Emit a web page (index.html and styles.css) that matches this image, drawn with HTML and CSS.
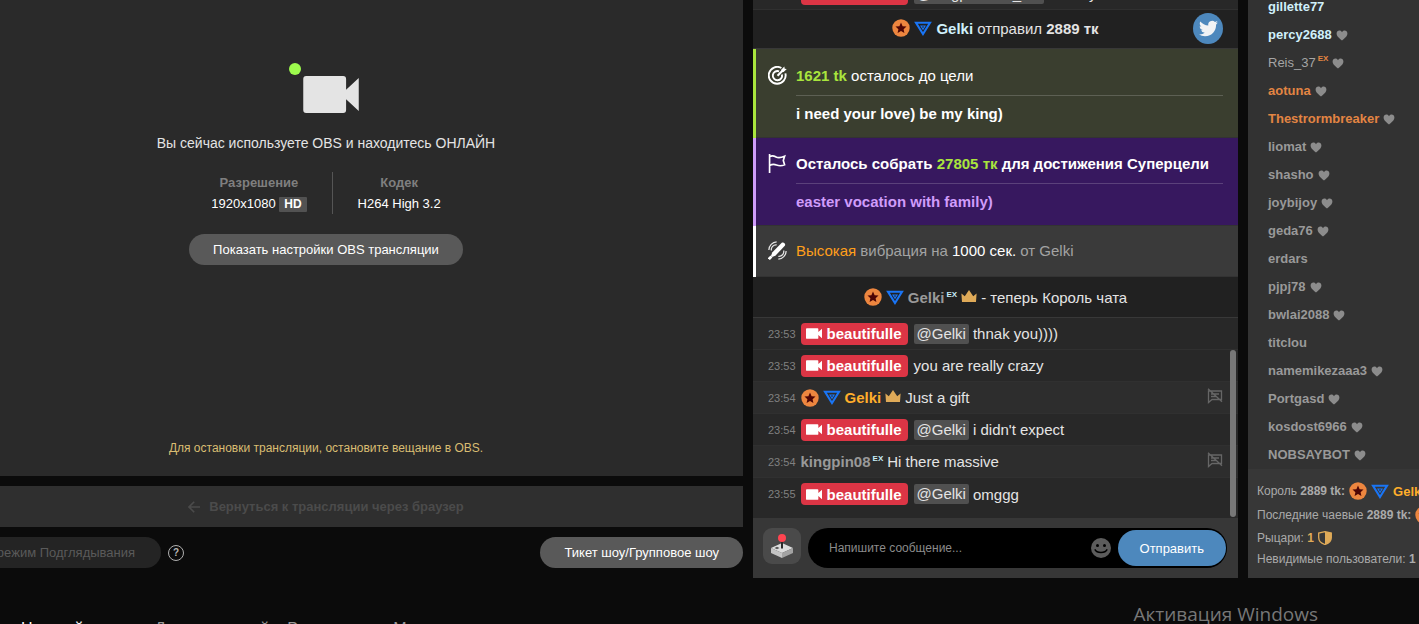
FILE: index.html
```html
<!DOCTYPE html>
<html lang="ru">
<head>
    <meta charset="UTF-8">
    <meta name="viewport" content="width=device-width, initial-scale=1.0">
    <title>Трансляция</title>
    <link rel="stylesheet" href="styles.css">
</head>
<body>
    <svg class="sprite" aria-hidden="true">
        <symbol id="star" viewBox="0 0 18 18">
            <circle cx="9" cy="9" r="8.7" fill="#ed863f"/>
            <path d="M9 3.6l1.6 3.6 3.9.4-2.9 2.6.8 3.9L9 12.1l-3.4 2 .8-3.9-2.9-2.6 3.9-.4z" fill="#4d0505"/>
        </symbol>
        <symbol id="tri" viewBox="0 0 18 15">
            <path d="M2 1.7h14L9 13z" fill="none" stroke="#1a75f5" stroke-width="2.1"/>
            <path d="M6 4.6h6L9 9.3z" fill="#1a75f5"/>
            <circle cx="9" cy="6" r=".8" fill="#222"/>
        </symbol>
        <symbol id="crown" viewBox="0 0 16 12">
            <path d="M.4 3.4l3.4 2.8L8 0l4.2 6.2 3.4-2.8-.6 8.6H1z" fill="#dfaa58"/>
        </symbol>
        <symbol id="cam" viewBox="0 0 57 38">
            <path d="M3 0h38a3 3 0 0 1 3 3v11L57 2v34L44 24v11a3 3 0 0 1-3 3H3a3 3 0 0 1-3-3V3a3 3 0 0 1 3-3z" fill="currentColor"/>
        </symbol>
        <symbol id="heart" viewBox="0 0 12 11">
            <path d="M6 10.6C3.5 8.5.6 6.4.6 3.6.6 1.8 1.9.6 3.4.6 4.5.6 5.5 1.2 6 2.2 6.5 1.2 7.5.6 8.6.6 10.1.6 11.4 1.8 11.4 3.6 11.4 6.4 8.5 8.5 6 10.6z" fill="#8c8c8c"/>
        </symbol>
        <symbol id="mute" viewBox="0 0 16 16">
            <path d="M1.5 3v11.5l3.5-3h9.500V3zM4 6h8M4 8.500h5M1 .8l14 13" fill="none" stroke="#666" stroke-width="1.3"/>
        </symbol>
    </svg>

    <main class="layout">
        <section class="stage">
            <div class="player">
                <div class="camera">
                    <svg class="camera-icon"><use href="#cam"/></svg>
                    <span class="camera-dot"></span>
                </div>
                <p class="status">Вы сейчас используете OBS и находитесь ОНЛАЙН</p>
                <dl class="info">
                    <div>
                        <dt>Разрешение</dt>
                        <dd>1920x1080 <span class="hd">HD</span></dd>
                    </div>
                    <div>
                        <dt>Кодек</dt>
                        <dd>H264 High 3.2</dd>
                    </div>
                </dl>
                <button type="button" class="btn">Показать настройки OBS трансляции</button>
                <p class="stop-hint">Для остановки трансляции, остановите вещание в OBS.</p>
            </div>
            <button type="button" class="back" disabled>
                <svg class="back-icon" viewBox="0 0 12 12"><path d="M12 6H1M6.2.8L1 6l5.2 5.2" fill="none" stroke="currentColor" stroke-width="1.6"/></svg>
                Вернуться к трансляции через браузер
            </button>
            <div class="modes">
                <button type="button" class="btn btn-off" disabled>Включить режим Подглядывания</button>
                <button type="button" class="help" aria-label="Помощь">?</button>
                <button type="button" class="btn btn-ticket">Тикет шоу/Групповое шоу</button>
            </div>
        </section>

        <section class="chat">
            <div class="messages">
                <div class="msg">
                    <time>23:53</time>
                    <span class="model"><svg class="model-icon"><use href="#cam"/></svg>beautifulle</span>
                    <span class="mention">@kingpin0899_EX</span>
                    <span>thank you</span>
                </div>
                <div class="system tip">
                    <svg class="star"><use href="#star"/></svg>
                    <svg class="tri"><use href="#tri"/></svg>
                    <span><b class="ice">Gelki</b> отправил <b>2889 тк</b></span>
                    <a href="#" class="twitter" aria-label="Twitter">
                        <svg viewBox="0 0 24 24"><path d="M23.95 4.57a10 10 0 0 1-2.82.77 4.96 4.96 0 0 0 2.16-2.72c-.95.55-2 .96-3.12 1.18a4.92 4.92 0 0 0-8.38 4.48C7.69 8.09 4.07 6.13 1.64 3.16a4.82 4.82 0 0 0-.67 2.48c0 1.71.87 3.21 2.19 4.1a4.9 4.9 0 0 1-2.23-.62v.06a4.92 4.92 0 0 0 3.95 4.83 5 5 0 0 1-2.21.08 4.94 4.94 0 0 0 4.6 3.42A9.87 9.87 0 0 1 0 19.54a13.99 13.99 0 0 0 7.55 2.21c9.05 0 14-7.5 14-13.98 0-.21 0-.42-.02-.63a9.94 9.94 0 0 0 2.42-2.57z" fill="#f1f3f5"/></svg>
                    </a>
                </div>
                <div class="card goal">
                    <svg class="card-icon" viewBox="0 0 18 18">
                        <g fill="none" stroke="#fff" stroke-width="1.8">
                            <path d="M12.7 1.9A8 8 0 1 0 16.5 7"/>
                            <path d="M10.5 5A4.400 4.400 0 1 0 13.200 8"/>
                            <path d="M9 9.200l4.500-4.500" stroke-width="2"/>
                        </g>
                        <path d="M12.5 3.5L15.5.5l.3 2 2 .3-3 3h-2.3z" fill="#fff"/>
                    </svg>
                    <div class="card-body">
                        <p><b class="green">1621 tk</b> осталось до цели</p>
                        <p class="card-note">i need your love) be my king)</p>
                    </div>
                </div>
                <div class="card super">
                    <svg class="card-icon" viewBox="0 0 18 18">
                        <path d="M1.5 0v18M1.5 2.500c3-1.500 4.500-.5 6 .3s4 1.200 8.200-.6l-1.200 4 1.200 4c-3.200 1.400-5.700 1-7.700.2s-3.500-1-6.500.4" fill="none" stroke="#fff" stroke-width="1.6"/>
                    </svg>
                    <div class="card-body">
                        <p><b>Осталось собрать <span class="green">27805 тк</span> для достижения Суперцели</b></p>
                        <p class="card-note">easter vocation with family)</p>
                    </div>
                </div>
                <div class="card vibro">
                    <svg class="card-icon" viewBox="0 0 18 18">
                        <path d="M2.8 14.200L4 11 13 1.700c1.800-1.300 4.200 1.100 2.900 2.900L7 14l-3.200 1.200z" fill="#fff"/>
                        <path d="M.8 17.200l2.500-2.500" stroke="#fff" stroke-width="2.600"/>
                        <g fill="none" stroke="#e4e4e4" stroke-width="1.2">
                            <path d="M3.2 9a4.500 4.500 0 0 1 5-5.300M.8 8.500a8 8 0 0 1 7.400-7.700M14.800 9a4.500 4.500 0 0 1-5 5.500M17.200 9.500a8 8 0 0 1-7.400 7.700"/>
                        </g>
                    </svg>
                    <p><span class="orange">Высокая</span> вибрация на <span class="white">1000 сек.</span> от Gelki</p>
                </div>
                <div class="system king">
                    <svg class="star"><use href="#star"/></svg>
                    <svg class="tri"><use href="#tri"/></svg>
                    <span><b class="grey">Gelki</b><sup>EX</sup></span>
                    <svg class="crown"><use href="#crown"/></svg>
                    <span>- теперь Король чата</span>
                </div>
                <div class="msg">
                    <time>23:53</time>
                    <span class="model"><svg class="model-icon"><use href="#cam"/></svg>beautifulle</span>
                    <span class="mention">@Gelki</span>
                    <span>thnak you))))</span>
                </div>
                <div class="msg">
                    <time>23:53</time>
                    <span class="model"><svg class="model-icon"><use href="#cam"/></svg>beautifulle</span>
                    <span>you are really crazy</span>
                </div>
                <div class="msg guest">
                    <time>23:54</time>
                    <svg class="star"><use href="#star"/></svg>
                    <svg class="tri"><use href="#tri"/></svg>
                    <b class="gold">Gelki</b>
                    <svg class="crown"><use href="#crown"/></svg>
                    <span>Just a gift</span>
                    <button type="button" class="mute" aria-label="Заглушить"><svg><use href="#mute"/></svg></button>
                </div>
                <div class="msg">
                    <time>23:54</time>
                    <span class="model"><svg class="model-icon"><use href="#cam"/></svg>beautifulle</span>
                    <span class="mention">@Gelki</span>
                    <span>i didn't expect</span>
                </div>
                <div class="msg guest">
                    <time>23:54</time>
                    <span><b class="grey">kingpin08</b><sup>EX</sup></span>
                    <span>Hi there massive</span>
                    <button type="button" class="mute" aria-label="Заглушить"><svg><use href="#mute"/></svg></button>
                </div>
                <div class="msg">
                    <time>23:55</time>
                    <span class="model"><svg class="model-icon"><use href="#cam"/></svg>beautifulle</span>
                    <span class="mention">@Gelki</span>
                    <span>omggg</span>
                </div>
                <span class="scroll-thumb"></span>
            </div>
            <form class="send-form" action="">
                <button type="button" class="games" aria-label="Игры">
                    <svg viewBox="0 0 22 24">
                        <path d="M0 14l11-5 11 5-11 5z" fill="#dcdcdc"/>
                        <path d="M0 14l11 5v5L0 19z" fill="#c4c4c4"/>
                        <path d="M22 14l-11 5v5l11-5z" fill="#a2a2a2"/>
                        <path d="M3.5 14L6 12.800 8.500 14 6 15.200z" fill="#555"/>
                        <path d="M11 7v7.500" stroke="#2b2b2b" stroke-width="2"/>
                        <circle cx="11" cy="4" r="4" fill="#ff4450"/>
                    </svg>
                </button>
                <div class="field">
                    <input id="message" type="text" placeholder="Напишите сообщение..." aria-label="Сообщение">
                    <button type="button" class="smile" aria-label="Смайлы">
                        <svg viewBox="0 0 20 20">
                            <circle cx="10" cy="10" r="10" fill="#5c5c5c"/>
                            <circle cx="6.500" cy="7.500" r="1.500" fill="#000"/>
                            <circle cx="13.500" cy="7.500" r="1.500" fill="#000"/>
                            <path d="M3.800 11.300c2.200 4.200 10.200 4.200 12.400 0" fill="none" stroke="#000" stroke-width="1.500"/>
                        </svg>
                    </button>
                    <button type="submit" class="send">Отправить</button>
                </div>
            </form>
        </section>

        <aside class="users">
            <ul class="user-list">
                <li class="ice">gillette77</li>
                <li class="ice">percy2688 <svg class="heart"><use href="#heart"/></svg></li>
                <li class="plain"><span>Reis_37<sup>EX</sup></span> <svg class="heart"><use href="#heart"/></svg></li>
                <li class="amber">aotuna <svg class="heart"><use href="#heart"/></svg></li>
                <li class="amber">Thestrormbreaker <svg class="heart"><use href="#heart"/></svg></li>
                <li>liomat <svg class="heart"><use href="#heart"/></svg></li>
                <li>shasho <svg class="heart"><use href="#heart"/></svg></li>
                <li>joybijoy <svg class="heart"><use href="#heart"/></svg></li>
                <li>geda76 <svg class="heart"><use href="#heart"/></svg></li>
                <li>erdars</li>
                <li>pjpj78 <svg class="heart"><use href="#heart"/></svg></li>
                <li>bwlai2088 <svg class="heart"><use href="#heart"/></svg></li>
                <li>titclou</li>
                <li>namemikezaaa3 <svg class="heart"><use href="#heart"/></svg></li>
                <li>Portgasd <svg class="heart"><use href="#heart"/></svg></li>
                <li>kosdost6966 <svg class="heart"><use href="#heart"/></svg></li>
                <li>NOBSAYBOT <svg class="heart"><use href="#heart"/></svg></li>
            </ul>
            <div class="totals">
                <div class="total tall">
                    <span>Король <b>2889 tk:</b></span>
                    <svg class="star"><use href="#star"/></svg>
                    <svg class="tri"><use href="#tri"/></svg>
                    <b class="gold">Gelki</b>
                </div>
                <div class="total tall">
                    <span>Последние чаевые <b>2889 tk:</b></span>
                    <svg class="star"><use href="#star"/></svg>
                </div>
                <div class="total">
                    <span>Рыцари: <b class="knight">1</b></span>
                    <svg class="shield" viewBox="0 0 14 14">
                        <path d="M7 .7L13.300 2v4.500C13.300 10 10.500 12.500 7 13.500 3.500 12.500.7 10 .7 6.500V2z" fill="none" stroke="#dfaa58" stroke-width="1.300"/>
                        <path d="M7 .7L13.300 2v4.500C13.300 10 10.500 12.500 7 13.500z" fill="#dfaa58"/>
                    </svg>
                </div>
                <div class="total"><span>Невидимые пользователи: <b>1</b></span></div>
            </div>
        </aside>
    </main>

    <nav class="tabs">
        <a href="#" class="active">Настройки чата</a>
        <a href="#">Доход моделей</a>
        <a href="#">Расписание</a>
        <a href="#">Мои</a>
    </nav>
    <div class="watermark">Активация Windows</div>
</body>
</html>
```
FILE: styles.css
```css
*{
    padding: 0;
    margin: 0;
    box-sizing: border-box;
}
body{
    height: 100vh;
    overflow: hidden;
    position: relative;
    font-family: "Liberation Sans", Arial, sans-serif;
    font-size: 15px;
    color: #e4e4e4;
    background: #0b0b0b;
}
button, input{
    font-family: inherit;
    border: none;
    outline: none;
}
button{
    cursor: pointer;
}
svg{
    display: block;
    flex-shrink: 0;
}
.sprite{
    position: absolute;
    width: 0;
    height: 0;
}
.layout{
    display: grid;
    grid-template-columns: minmax(0, 743fr) minmax(0, 485fr) minmax(0, 171fr);
    column-gap: 10px;
    height: 578px;
}

/* broadcast */
.stage{
    margin-left: -91px;
    display: flex;
    flex-direction: column;
    gap: 10px;
}
.player{
    flex: 1;
    display: flex;
    flex-direction: column;
    align-items: center;
    padding: 76px 0 20px;
    background: #2a2a2a;
}
.camera{
    position: relative;
    color: #e4e4e4;
}
.camera-icon{
    width: 56px;
    height: 37px;
    margin-left: 10px;
}
.camera-dot{
    position: absolute;
    top: -13px;
    left: -4px;
    width: 12px;
    height: 12px;
    border-radius: 50%;
    background: #9dfb4d;
}
.status{
    margin-top: 20px;
    font-size: 14px;
    line-height: 20px;
}
.info{
    display: flex;
    margin: 19px 0 20px;
    font-size: 13px;
    line-height: 21px;
    text-align: center;
}
.info div{
    padding: 0 25px;
}
.info div + div{
    border-left: 1px solid #555;
}
.info dt{
    font-weight: bold;
    color: #7f7f7f;
}
.info dd{
    color: #fff;
}
.hd{
    padding: 0 5px;
    font-size: 12px;
    font-weight: bold;
    line-height: 15px;
    display: inline-block;
    border-radius: 1px;
    background: #525252;
}
.btn{
    height: 31px;
    padding: 0 24px;
    border-radius: 16px;
    font-size: 13px;
    color: #fff;
    background: #595959;
}
.stop-hint{
    margin-top: auto;
    font-size: 12px;
    line-height: 16px;
    color: #d9bd72;
}
.back{
    height: 41px;
    display: flex;
    align-items: center;
    justify-content: center;
    gap: 9px;
    font-size: 13px;
    font-weight: bold;
    color: #4b4b4b;
    background: #2f2f2f;
}
.back-icon{
    width: 12px;
    height: 12px;
}
.modes{
    display: flex;
    align-items: center;
    gap: 7px;
    margin-bottom: 10px;
}
.btn-off{
    min-width: 252px;
    color: #5a5a5a;
    background: #242424;
}
.help{
    width: 16px;
    height: 16px;
    border: 1px solid #b0b0b0;
    border-radius: 50%;
    font-size: 10px;
    font-weight: bold;
    line-height: 14px;
    color: #b5b5b5;
    background: none;
}
.btn-ticket{
    margin-left: auto;
}

/* chat */
.chat{
    display: flex;
    flex-direction: column;
    min-height: 0;
}
.messages{
    flex: 1;
    min-height: 0;
    position: relative;
    overflow: hidden;
    display: flex;
    flex-direction: column;
    justify-content: flex-end;
    padding-bottom: 8px;
    background: #282828;
}
.messages > div{
    flex-shrink: 0;
}
.star{
    width: 18px;
    height: 18px;
}
.tri{
    width: 18px;
    height: 15px;
}
.crown{
    width: 16px;
    height: 12px;
    margin-bottom: 3px;
}
.msg, .system{
    display: flex;
    align-items: center;
    gap: 4px;
    border-bottom: 1px solid #303030;
}
.msg{
    height: 32px;
    padding: 0 15px;
}
.msg:last-of-type{
    border-bottom: none;
}
.msg.guest{
    background: #2d2d2d;
}
.msg time{
    margin-right: 1px;
    font-size: 11px;
    color: #808080;
}
.model{
    height: 22px;
    display: flex;
    align-items: center;
    gap: 5px;
    margin-right: 2px;
    padding: 0 6px 0 5px;
    border-radius: 4px;
    font-weight: bold;
    color: #fff;
    background: #dc3545;
}
.model-icon{
    width: 16px;
    height: 11px;
}
.mention{
    padding: 0 3px;
    line-height: 20px;
    border-radius: 2px;
    background: #505050;
}
.mute{
    margin-left: auto;
    margin-bottom: 4px;
    background: none;
}
.mute svg{
    width: 16px;
    height: 16px;
}
sup{
    margin-left: 2px;
    font-size: 8px;
    font-weight: bold;
    line-height: 0;
    vertical-align: 6px;
    color: #c7ecf7;
}
.system{
    position: relative;
    justify-content: center;
    background: #212121;
    border-color: #383838;
}
.tip{
    height: 39px;
    padding-bottom: 2px;
}
.king{
    height: 41px;
}
.twitter{
    position: absolute;
    right: 15px;
    top: 3px;
    width: 30px;
    height: 31px;
    display: flex;
    align-items: center;
    justify-content: center;
    border-radius: 50%;
    background: #4d88bd;
}
.twitter svg{
    width: 19px;
    height: 19px;
}
.card{
    display: flex;
    gap: 9px;
    padding: 16px 15px 12px 12px;
    border-left: 3px solid;
    box-shadow: inset 0 -1px #333;
    line-height: 22px;
}
.card-icon{
    width: 19px;
    height: 19px;
    margin-top: 1px;
}
.card-body{
    flex: 1;
    color: #fff;
}
.card-note{
    margin-top: 8px;
    padding-top: 7px;
    border-top: 1px solid rgba(255, 255, 255, 0.18);
    font-weight: bold;
}
.goal{
    height: 89px;
    border-color: #a9e53d;
    background: #3a3e2f;
}
.super{
    height: 88px;
    padding-top: 15px;
    border-color: #cf9cfa;
    background: #37185f;
}
.super .card-note{
    color: #d09cfb;
}
.vibro{
    height: 51px;
    padding-top: 14px;
    border-color: #fff;
    color: #a3a3a3;
    background: #3a3a3a;
}
.green{
    color: #a9e53d;
}
.orange{
    color: #ff9f1a;
}
.white{
    color: #fff;
}
.gold{
    color: #ffae2b;
}
.grey{
    color: #999;
}
.ice{
    color: #d0f0fb;
}
.scroll-thumb{
    position: absolute;
    right: 2px;
    bottom: 1px;
    width: 6px;
    height: 167px;
    border-radius: 3px;
    background: #777;
}
.send-form{
    height: 60px;
    display: flex;
    gap: 7px;
    padding: 10px 11px 10px 10px;
    background: #373737;
}
.games{
    width: 38px;
    height: 36px;
    display: flex;
    align-items: center;
    justify-content: center;
    border-radius: 9px;
    background: #4a4a4a;
}
.games svg{
    width: 22px;
    height: 24px;
}
.field{
    flex: 1;
    min-width: 0;
    display: flex;
    align-items: center;
    padding: 2px 1px 2px 21px;
    border-radius: 20px;
    background: #000;
}
.field input{
    flex: 1;
    min-width: 0;
    font-size: 12px;
    color: #fff;
    background: none;
}
.field input::placeholder{
    color: #8b8b8b;
}
.smile{
    margin-right: 7px;
    background: none;
}
.smile svg{
    width: 20px;
    height: 20px;
}
.send{
    height: 36px;
    padding: 0 22px;
    border-radius: 18px;
    font-size: 13px;
    color: #fff;
    background: #4d88bd;
}

/* users */
.users{
    display: flex;
    flex-direction: column;
    min-height: 0;
    overflow: hidden;
    white-space: nowrap;
    background: #323232;
}
.user-list{
    flex: 1;
    min-height: 0;
    display: flex;
    flex-direction: column;
    justify-content: flex-end;
    list-style: none;
    padding: 0 0 1px 20px;
    font-size: 13px;
    font-weight: bold;
    color: #999;
}
.user-list li{
    display: flex;
    flex-shrink: 0;
    align-items: center;
    gap: 4px;
    height: 28px;
}
.user-list .plain{
    font-weight: normal;
    color: #a5a5a5;
}
.user-list .ice{
    color: #d0f0fb;
}
.user-list .amber{
    color: #e38543;
}
.user-list sup{
    color: #e38543;
}
.heart{
    width: 12px;
    height: 11px;
    margin-top: 2px;
}
.totals{
    padding: 10px 0 9px 9px;
    font-size: 12px;
    color: #aaa;
    background: #373737;
}
.total{
    height: 21px;
    display: flex;
    align-items: center;
    gap: 4px;
}
.total.tall{
    height: 24px;
}
.total .gold{
    font-size: 13px;
}
.total .knight{
    color: #dfaa58;
}
.shield{
    width: 14px;
    height: 14px;
}

/* bottom */
.tabs{
    display: flex;
    gap: 18px;
    padding: 41px 21px 0;
    font-size: 16px;
    line-height: 20px;
}
.tabs a{
    color: #999;
    text-decoration: none;
}
.tabs .active{
    color: #fff;
}
.watermark{
    position: absolute;
    right: 101px;
    bottom: -4px;
    font-family: "Open Sans", "Noto Sans", sans-serif;
    font-size: 19px;
    line-height: 28px;
    color: #777;
}
```
